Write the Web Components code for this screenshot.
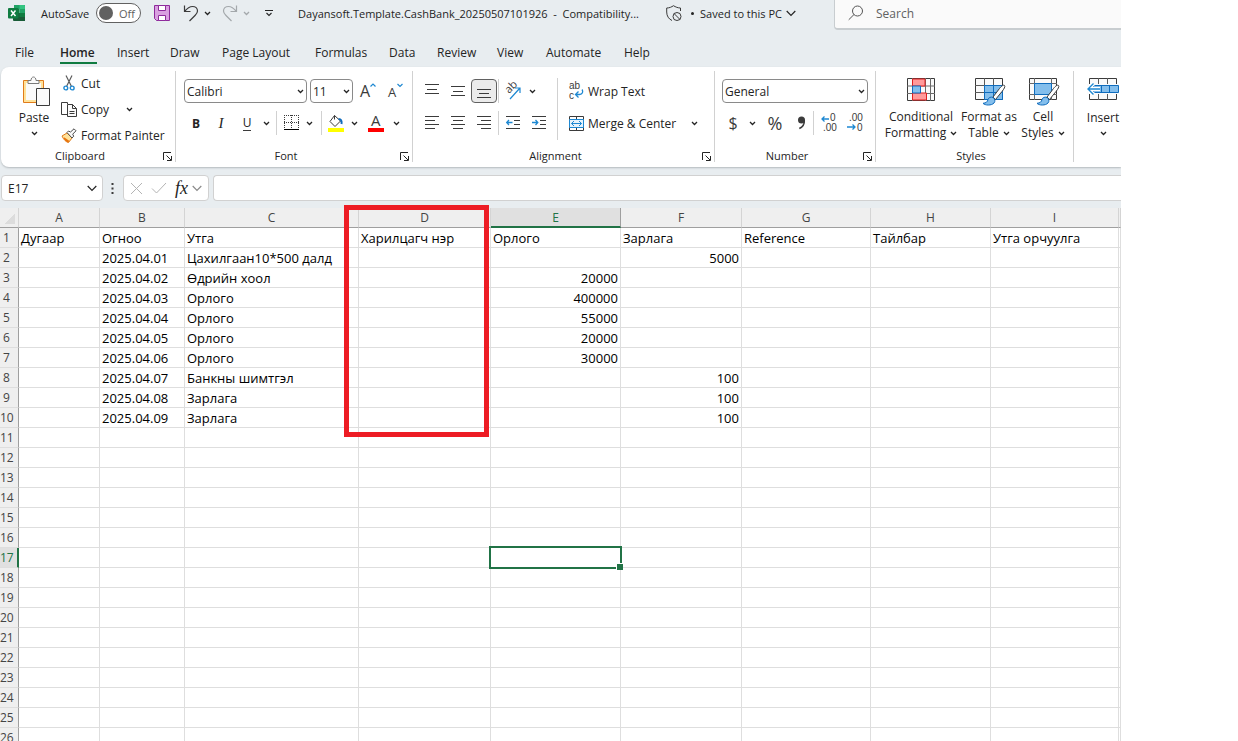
<!DOCTYPE html>
<html lang="en">
<head>
<meta charset="utf-8">
<title>Dayansoft.Template.CashBank_20250507101926 - Excel</title>
<style>
html, body { margin: 0; height: 100%; overflow: hidden; background: #fff; }
body { font-family: "Open Sans", "Noto Sans", sans-serif; font-size: 12px; color: #242424; }
</style>
</head>
<body>
<xl-app></xl-app>
<script>
const define = (name, css, html, ready) => {
  const tpl = document.createElement('template');
  tpl.innerHTML = `<style>*{box-sizing:border-box}${css}</style>${html}`;
  customElements.define(name, class extends HTMLElement {
    constructor() {
      super();
      this.attachShadow({ mode: 'open' }).append(tpl.content.cloneNode(true));
    }
    connectedCallback() { if (ready) ready.call(this, this.shadowRoot); }
  });
};

/* ---------- icons: [width, height, markup] ---------- */
const D = 'stroke="#3b3b3b" fill="none"';
const B = 'stroke="#1e88d2" fill="none"';
const brush = `<path d="M31.500 7.500c-1-1-3 .5-5 3l-6.500 8.500 2.500 2.500 6.500-8c2-2.500 3.500-5 2.500-6z" fill="#fff" stroke="#3b3b3b"/><path d="M20 19.500c-2-1-4.500 0-5 2-.5 2.500-2 3.500-5 3.800 2 2.200 8.500 2.500 11-.3 1.500-1.800 1-4-1-5.500z" fill="#83beec" stroke="#0f6cbd"/>`;
const lines = (w, ys, rows) => ys.map((y, i) => `<path d="M${rows[i][0]} ${y}.500H${rows[i][1]}" ${D}/>`).join('');
const SM = 'font-family="Liberation Sans" font-size="10" fill="#3b3b3b"';
const ICONS = {
  excel: [18, 18, `<path d="M6 1h11v4H6z" fill="#21a366"/><path d="M11.500 1H16a1 1 0 0 1 1 1v3h-5.500z" fill="#33c481"/><path d="M5 5h6.500v4H5z" fill="#107c41"/><path d="M11.500 5H17v4h-5.500z" fill="#21a366"/><path d="M5 9h12v8H6a1 1 0 0 1-1-1z" fill="#185c37"/><path d="M11.500 9H17v4h-5.500z" fill="#107c41"/><rect y="4" width="10.500" height="10.500" rx="1" fill="#107c41"/><path d="M3 6.500l4.500 5.500M7.500 6.500L3 12" stroke="#fff" stroke-width="1.500"/>`],
  save: [16, 16, `<path d="M.5.500h15v15h-13l-2-2z" fill="#d9a0e0" stroke="#8e2a9c"/><path d="M4.500.500h7v5h-7zM4.500 10.500h7v5h-7z" fill="#fff" stroke="#8e2a9c"/>`],
  undo: [16, 17, `<path d="M1.500.500v6h6M1.500 6.500C4 3.500 6.500 1.500 9.500 1.500c3 0 5 2 5 4.500 0 2-1 3-2.500 4.500L6.500 16" ${D} stroke-width="1.200"/>`],
  redo: [16, 17, `<path d="M14.500.500v6h-6M14.500 6.500C12 3.500 9.500 1.500 6.500 1.500c-3 0-5 2-5 4.500 0 2 1 3 2.500 4.500L9.500 16" stroke="#a3a8ab" fill="none" stroke-width="1.200"/>`],
  chev: [7, 5, `<path d="M1 1l2.500 2.500L6 1" stroke="currentColor" stroke-width="1.300" fill="none"/>`],
  bigchev: [10, 7, `<path d="M.7 1L5 5.300 9.300 1" stroke="currentColor" stroke-width="1.200" fill="none"/>`],
  custom: [8, 7, `<path d="M0 .500h8M1.500 3L4 5.500 6.500 3" stroke="#242424" fill="none" stroke-width="1.100"/>`],
  shield: [16, 17, `<path d="M14.500 6V3C12 3 9.500 2 7.500.700 5.500 2 3.500 3 .700 3v4c0 4 2 7 5.300 8.500" ${D}/><circle cx="11" cy="11.500" r="4" ${D}/><path d="M8.200 8.700l5.600 5.600" ${D}/>`],
  search: [16, 16, `<circle cx="9.500" cy="6" r="5" stroke="#555" fill="none"/><path d="M6 9.500L.700 14.800" stroke="#555"/>`],
  paste: [28, 31, `<path d="M1.500 4.500h20v22h-20z" fill="#ffe29a" stroke="#e07b1a"/><path d="M4 7h15v17H4z" fill="#fafafa"/><path d="M6 7.500V4.500h3c0-2 1-3.500 2.500-3.500S14 2.500 14 4.500h3v3z" fill="#fafafa" stroke="#7a7a7a"/><path d="M14.500 12.500h13v17h-13z" fill="#fafafa" stroke="#3b3b3b"/>`],
  cut: [12, 16, `<path d="M3 .500l5.500 11M9 .500L3.500 11.500" stroke="#5c5c5c" fill="none" stroke-width="1.200"/><circle cx="2.800" cy="13" r="1.900" ${B} stroke-width="1.400"/><circle cx="9.200" cy="13" r="1.900" ${B} stroke-width="1.400"/>`],
  copy: [16, 17, `<path d="M6 13.500H.500V1.500h6V3" ${D}/><path d="M6.500 3.500h5l4 4v8h-9z" fill="#fafafa" stroke="#3b3b3b"/><path d="M11.500 3.500v4h4M8.500 10.500h5M8.500 12.500h5" ${D}/>`],
  painter: [16, 15, `<path d="M1 8l5-3 5 5-3.500 4.500C5 14 2.500 11.500 1 8z" fill="#ffe29a" stroke="#e07b1a"/><path d="M3.500 9.500l5 3.500-1.500 1.500C5 13.500 3.500 12 2.500 10z" fill="#e8730c"/><path d="M6 4.500l1.500-1.500 2 1 3.500-3.200 2 2-3.300 3.400 1 2L11 10z" fill="#fafafa" stroke="#4a4a4a"/>`],
  launch: [9, 9, `<path d="M.500 8V.500H8M3.500 3.500l4.500 4.500M8.500 4v4.500H4" stroke="#242424" fill="none"/>`],
  growA: [16, 18, `<text x="0" y="15" font-size="16" fill="#3b3b3b">A</text><path d="M10.500 4.500L13 2l2.500 2.500" ${B} stroke-width="1.200"/>`],
  shrinkA: [16, 18, `<text x="1" y="15" font-size="13" fill="#3b3b3b">A</text><path d="M10.500 2l2.500 2.500L15.500 2" ${B} stroke-width="1.200"/>`],
  borders: [15, 16, `<path d="M0 .500h15M0 7.500h15M.500 0v14M7.500 0v14M14.500 0v14" stroke="#3b3b3b" stroke-dasharray="1 1"/><path d="M0 14.500h15" stroke="#000"/>`],
  fill: [16, 17, `<path d="M6.500 0.500l6 5.500-5.500 5.500L2 6.500zM6.500.500v4" fill="#fff" stroke="#3b3b3b"/><path d="M10.500 4c2.500 0 3.500 1.500 3 5" stroke="#0f6cbd" stroke-width="2" fill="none"/><path d="M0 13h16v4H0z" fill="#ff0"/>`],
  fontcolor: [16, 17, `<text x="3" y="11" font-size="15" fill="#3b3b3b">A</text><path d="M0 13h16v4H0z" fill="#f00"/>`],
  top: [14, 14, lines(14, [0, 5, 9], [[0, 14], [2, 12], [0, 14]])],
  middle: [14, 14, lines(14, [2, 7, 11], [[0, 14], [2, 12], [0, 14]])],
  bottom: [14, 14, lines(14, [5, 9, 13], [[0, 14], [2, 12], [0, 14]])],
  left: [14, 14, lines(14, [0, 4, 8, 12], [[0, 14], [0, 10], [0, 14], [0, 10]])],
  center: [14, 14, lines(14, [0, 4, 8, 12], [[0, 14], [2, 12], [0, 14], [2, 12]])],
  right: [14, 14, lines(14, [0, 4, 8, 12], [[0, 14], [4, 14], [0, 14], [4, 14]])],
  orient: [18, 17, `<text x="0" y="0" font-size="11" fill="#3b3b3b" transform="translate(5 11) rotate(-45)">ab</text><path d="M6 16L15.500 5.500M11 5h5v5" ${B} stroke-width="1.200"/>`],
  outdent: [14, 14, `<path d="M0 .500h14M8 4.500h6M8 8.500h6M0 12.500h14" ${D}/><path d="M6.500 6.500H.800M3 4L.700 6.500 3 9" ${B} stroke-width="1.300"/>`],
  indent: [14, 14, `<path d="M0 .500h14M8 4.500h6M8 8.500h6M0 12.500h14" ${D}/><path d="M0 6.500h5.500M3.500 4l2.300 2.500L3.500 9" ${B} stroke-width="1.300"/>`],
  wrap: [15, 18, `<text x="0" y="7" ${SM}>ab</text><text x="0" y="17" ${SM}>c</text><path d="M13 7.500c1.500 2 .5 5-2.500 5H6.500M9.500 9.500l-3 3 3 3" ${B} stroke-width="1.300"/>`],
  merge: [15, 15, `<path d="M.500.500h14v14H.500zM7.500 0v4M7.500 11v4" ${D}/><path d="M.500 3.500h14v8H.500z" fill="#e6f3fc" stroke="#1e88d2"/><path d="M2.500 7.500h10M5 5L2.500 7.500 5 10M10 5l2.500 2.500L10 10" ${B}/>`],
  incdec: [16, 18, `<text x="9" y="7" ${SM}>0</text><text x="2" y="17" ${SM}>.00</text><path d="M8 5H1M3.500 2.500L1 5l2.500 2.500" ${B} stroke-width="1.300"/>`],
  decdec: [16, 18, `<text x="2" y="7" ${SM}>.00</text><text x="10" y="17" ${SM}>0</text><path d="M0 13h8M5.500 10.500L8 13l-2.500 2.500" ${B} stroke-width="1.300"/>`],
  cond: [28, 24, `<path d="M.500.500h27v22H.500z" fill="#fafafa" stroke="#3b3b3b"/><path d="M18.500 0v23M23.500 0v23M0 8h28M0 15.500h28M5.500 0v23" stroke="#6a6a6a" fill="none"/><path d="M5.500 1h12.500v7H5.500zM5.500 15h14v7h-14z" fill="#ff9a9a" stroke="#e02020"/><path d="M5.500 8h8v7h-8z" fill="#83beec" stroke="#0f6cbd"/>`],
  fmttable: [28, 24, `<path d="M.500.500h27v21H.500z" fill="#fafafa" stroke="#3b3b3b"/><path d="M9.500 0v22M18.500 0v22M0 7.500h28M0 14.500h28" stroke="#5a5a5a" fill="none"/><path d="M9.500 7.500h18v14h-18z" fill="#83beec"/><path d="M9.500 7.500h18v14h-18zM9 14.500h18M18.500 7.500v14" fill="none" stroke="#0f6cbd"/><g transform="translate(-2 0)">${brush}</g>`],
  cellstyle: [28, 24, `<path d="M.500.500h27v21H.500z" fill="#fafafa" stroke="#3b3b3b"/><path d="M5.500 0v22M22.500 0v22M0 5.500h28M0 16.500h28" stroke="#6a6a6a" fill="none"/><path d="M5.500 5.500h17v11h-17z" fill="#83beec" stroke="#0f6cbd"/><g transform="translate(-2 0)">${brush}</g>`],
  insert: [32, 24, `<path d="M2.500.500h27v21h-27z" fill="#fafafa" stroke="#3b3b3b"/><path d="M11.500 0v22M20.500 0v22" stroke="#5a5a5a"/><path d="M0 6h32v10H0z" fill="#fafafa"/><path d="M6.500 7.500h25v7h-25z" fill="#83beec" stroke="#0f6cbd"/><path d="M14.500 7.500v7M22.500 7.500v7" stroke="#0f6cbd"/><path d="M13 11H1M6.500 5.500L1 11l5.500 5.500" stroke="#fff" stroke-width="4" fill="none"/><path d="M13 11H1M6.500 5.500L1 11l5.500 5.500" ${B} stroke-width="1.400"/>`],
  cancel: [13, 13, `<path d="M1 1l11 11M12 1L1 12" stroke="#b4b4b4"/>`],
  accept: [16, 12, `<path d="M1 6.500l4.500 4.500L15 1" stroke="#b4b4b4" fill="none"/>`],
  dots: [3, 11, `<path d="M.500 0h2v2h-2zM.500 4.500h2v2h-2zM.500 9h2v2h-2z" fill="#3b3b3b"/>`],
  comma: [9, 14, `<circle cx="4.500" cy="4" r="3.500" fill="#3b3b3b"/><path d="M7.300 4c.300 4-1.600 7-5 8.500" stroke="#3b3b3b" stroke-width="1.500" fill="none"/>`],
};
customElements.define('xl-icon', class extends HTMLElement {
  constructor() { super(); this.attachShadow({ mode: 'open' }); }
  connectedCallback() {
    const [w, h, body] = ICONS[this.getAttribute('name')];
    this.shadowRoot.innerHTML = `<style>:host{display:block;flex:none;width:${w}px;height:${h}px}svg{display:block;overflow:visible}</style><svg width="${w}" height="${h}" viewBox="0 0 ${w} ${h}" aria-hidden="true">${body}</svg>`;
  }
});

const BTN = `button{font:inherit;color:inherit;background:none;border:0;padding:0;margin:0;display:flex;align-items:center;justify-content:center;flex:none}`;

/* ---------- title bar ---------- */
define('xl-titlebar', `
:host{display:flex;align-items:flex-start;height:39px}
${BTN}
.bar{display:flex;align-items:center;height:26px;padding-left:8px;width:834px;flex:none;font-size:11px;white-space:nowrap}
.auto{display:flex;align-items:center;margin-left:15px;gap:7px}
.track{position:relative;display:flex;align-items:center;width:45px;height:20px;border:1px solid #616161;border-radius:10px;background:#fff;color:#616161}
input[type=checkbox]{appearance:none;width:14px;height:14px;border-radius:50%;background:#616161;margin:0 6px 0 2px}
.off{color:#616161}
.save{margin-left:13px}.undo{margin-left:13px}.cv{width:16px;height:16px}.redo{margin-left:7px}.pale{color:#a3a8ab}.custom{margin-left:11px}
h1{font:inherit;margin:0 0 0 25px;width:368px;white-space:pre}
.saved{display:flex;align-items:center;gap:4px}
.dot{width:3px;height:3px;border-radius:50%;background:#242424;margin:0 6px 0 9px}
.search{flex:1;display:flex;align-items:center;height:30px;padding:0 0 2px 13px;gap:12px;background:#fafafa;border:solid #c8cdd0;border-width:0 0 2px 1px;border-radius:0 0 0 4px;min-width:0}
.search input{border:0;background:none;font:inherit;padding:0;flex:1;min-width:0;outline:0}
.search input::placeholder{color:#616161;opacity:1}
`, `
<div class="bar"><xl-icon name="excel"></xl-icon>
<label class="auto">AutoSave<span class="track"><input type="checkbox"><span class="off">Off</span></span></label>
<button class="save" aria-label="Save"><xl-icon name="save"></xl-icon></button>
<button class="undo" aria-label="Undo"><xl-icon name="undo"></xl-icon></button><button class="cv" aria-label="Undo list"><xl-icon name="chev"></xl-icon></button>
<button class="redo" aria-label="Redo"><xl-icon name="redo"></xl-icon></button><button class="cv pale" aria-label="Redo list"><xl-icon name="chev"></xl-icon></button>
<button class="custom" aria-label="Customize toolbar"><xl-icon name="custom"></xl-icon></button>
<h1>Dayansoft.Template.CashBank_20250507101926  -  Compatibility...</h1>
<xl-icon name="shield"></xl-icon><span class="dot"></span>
<button class="saved">Saved to this PC<xl-icon name="bigchev"></xl-icon></button></div>
<label class="search"><xl-icon name="search"></xl-icon><input type="search" placeholder="Search" aria-label="Search"></label>`);

/* ---------- tabs ---------- */
define('xl-tabs', `
:host{display:block;height:28px}
nav{display:flex;padding-left:15px;gap:20px}
a{color:inherit;text-decoration:none;line-height:20px;padding:4px 0 0;white-space:nowrap;flex:none;height:25px}
a.on{font-weight:600;border-bottom:2px solid #107c41}
.w1{width:25px}.w2{width:37px}.w3{width:33px}.w4{width:32px}.w5{width:73px}.w6{width:54px}.w7{width:28px}.w8{width:40px}.w9{width:29px}.w10{width:58px}
`, `<nav>${['File', 'Home', 'Insert', 'Draw', 'Page Layout', 'Formulas', 'Data', 'Review', 'View', 'Automate', 'Help']
  .map((t, i) => `<a href="#" class="w${i + 1}${t === 'Home' ? ' on' : ''}">${t}</a>`).join('')}</nav>`);

/* ---------- ribbon group: body slot and caption ---------- */
define('xl-group', `
:host{display:flex;flex-direction:column;flex:none;position:relative;height:100%;border-right:1px solid transparent;border-image:linear-gradient(transparent 5px,#d1d1d1 5px,#d1d1d1 94px,transparent 94px) 1}
.body{height:79px}
footer{display:flex;align-items:center;height:21px;padding:0 3px 0 0}
footer span{flex:1;text-align:center;font-size:11px;line-height:18px;padding:0 4px 1px 0}
${BTN}
`, `<div class="body"><slot></slot></div><footer><span></span><button aria-label="More options"><xl-icon name="launch"></xl-icon></button></footer>`,
function (root) {
  root.querySelector('footer span').textContent = this.getAttribute('label') || '';
  if (this.hasAttribute('plain')) root.querySelector('footer button').remove();
});

/* ---------- boxed drop-down ---------- */
define('xl-combo', `
:host{display:flex;align-items:center;position:relative;height:24px;border:1px solid #8a8a8a;border-radius:4px;background:#fff;flex:none}
select{appearance:none;border:0;background:none;font:inherit;font-size:12px;color:inherit;flex:1;min-width:0;padding:0 0 0 2px;height:20px;outline:0}
xl-icon{margin-right:2px}
`, `<select><option></option></select><xl-icon name="chev"></xl-icon>`,
function (root) {
  root.querySelector('option').textContent = this.getAttribute('value');
  root.querySelector('select').setAttribute('aria-label', this.getAttribute('label'));
});

/* ---------- ribbon ---------- */
const b = (icon, w, label, extra = '') => `<button class="w${w}" ${extra} aria-label="${label}"><xl-icon name="${icon}"></xl-icon></button>`;
define('xl-ribbon', `
:host{display:flex;height:100px;margin-left:1px;background:#fff;border-radius:8px 0 0 8px;box-shadow:0 1px 2px #b4babd;overflow:visible}
${BTN}
xl-group.clip{width:175px}xl-group.font{width:237px}xl-group.align{width:302px}xl-group.num{width:161px}xl-group.styles{width:198px}xl-group.cells{width:56px;border:0}
.w8{width:8px}.w12{width:12px}.w14{width:14px}.w16{width:16px}.w20{width:20px}.w24{width:24px}.w26{width:26px}.w28{width:28px}.w32{width:32px}
.split{display:flex}
.big{flex-direction:column;justify-content:flex-start;padding-top:9px;width:66px;line-height:16px}
.big xl-icon[name=chev]{margin-top:5px}
.big xl-icon[name=paste]{margin:0 0 3px 4px}
.list{display:grid;grid-template-rows:repeat(3,26px);padding-top:3px;margin-left:-6px}
.item{display:flex;align-items:center;gap:4px}
.item>button{gap:4px;white-space:nowrap}
.ic{display:flex;justify-content:center;width:16px;flex:none}
.rows{display:grid;grid-template-rows:24px 24px;gap:8px;padding:12px 0 0 8px}
.row{display:flex;align-items:center}
.row>button{height:24px}
.font .row:first-child{gap:3px}
i.sep{display:block;flex:none;width:1px;height:24px;background:#d1d1d1;margin:0 4px}
.name{width:123px}.size{width:43px}.fmt{width:146px}
.b{font-weight:700}.i{font-style:italic;font-family:"Liberation Serif",serif;font-size:15px}.u span{border-bottom:1px solid #3b3b3b;line-height:14px}
.on{background:#ebebeb;border:1px solid #616161;border-radius:4px}
.align .rows{padding-left:6px}.align i.sep{margin:0 1px}
.long{width:1px;height:62px;background:#d1d1d1;margin:11px 0 0 5px;flex:none}
.align .wide{padding-left:10px}
.wide button{gap:4px;white-space:nowrap}
.wide .arrow{margin-left:10px}
.num i.sep{margin:0 2px}.num .rows{padding-left:6px}
.num .fmt{margin-left:1px}
.sym{font-size:16px;color:#3b3b3b}
.pct{font-size:18px}
.tiles{display:flex;padding-left:10px}
.tiles button{flex-direction:column;justify-content:flex-start;padding-top:11px;line-height:16px;white-space:nowrap}
.tiles button>xl-icon{margin-bottom:7px}
.tiles .l2{display:flex;align-items:center;gap:4px}
.tile1{width:70px}.tile2{width:66px}.tile3{width:42px}
.cells .big{width:58px;padding-top:11px}.cells .big xl-icon:first-child{margin-bottom:8px}
`, `
<xl-group class="clip" label="Clipboard"><div class="split">
 <button class="big"><xl-icon name="paste"></xl-icon>Paste<xl-icon name="chev"></xl-icon></button>
 <div class="list">
  <div class="item"><button><span class="ic"><xl-icon name="cut"></xl-icon></span>Cut</button></div>
  <div class="item"><button><span class="ic"><xl-icon name="copy"></xl-icon></span>Copy</button>${b('chev', 32, 'Copy options')}</div>
  <div class="item"><button><span class="ic"><xl-icon name="painter"></xl-icon></span>Format Painter</button></div>
 </div></div></xl-group>
<xl-group class="font" label="Font"><div class="rows">
 <div class="row"><xl-combo class="name" value="Calibri" label="Font"></xl-combo><xl-combo class="size" value="11" label="Font size"></xl-combo>${b('growA', 24, 'Increase font size')}${b('shrinkA', 24, 'Decrease font size')}</div>
 <div class="row"><button class="w24 b">B</button><button class="w26 i">I</button><button class="w26 u"><span>U</span></button>${b('chev', 12, 'Underline options')}<i class="sep"></i>${b('borders', 20, 'Borders')}${b('chev', 16, 'Border options')}<i class="sep"></i>${b('fill', 20, 'Fill colour')}${b('chev', 16, 'Fill options')}${b('fontcolor', 28, 'Font colour')}${b('chev', 12, 'Font colour options')}</div>
</div></xl-group>
<xl-group class="align" label="Alignment"><div class="split"><div class="rows">
 <div class="row">${b('top', 26, 'Top align')}${b('middle', 26, 'Middle align')}<button class="w26 on" aria-label="Bottom align" aria-pressed="true"><xl-icon name="bottom"></xl-icon></button><i class="sep"></i>${b('orient', 26, 'Orientation')}${b('chev', 12, 'Orientation options')}</div>
 <div class="row">${b('left', 26, 'Align left')}${b('center', 26, 'Center')}${b('right', 26, 'Align right')}<i class="sep"></i>${b('outdent', 26, 'Decrease indent')}${b('indent', 26, 'Increase indent')}</div>
</div><div class="long"></div><div class="rows wide">
 <div class="row"><button><span class="ic"><xl-icon name="wrap"></xl-icon></span>Wrap Text</button></div>
 <div class="row"><button><span class="ic"><xl-icon name="merge"></xl-icon></span>Merge &amp; Center</button><button class="arrow w16" aria-label="Merge options"><xl-icon name="chev"></xl-icon></button></div>
</div></div></xl-group>
<xl-group class="num" label="Number"><div class="rows">
 <div class="row"><xl-combo class="fmt" value="General" label="Number format"></xl-combo></div>
 <div class="row"><button class="w24 sym">$</button>${b('chev', 14, 'Currency options')}<button class="w32 sym pct">%</button>${b('comma', 20, 'Comma style')}<i class="sep"></i>${b('incdec', 26, 'Increase decimal')}${b('decdec', 26, 'Decrease decimal')}</div>
</div></xl-group>
<xl-group class="styles" label="Styles" plain><div class="tiles">
 <button class="tile1"><xl-icon name="cond"></xl-icon>Conditional<span class="l2">Formatting<xl-icon name="chev"></xl-icon></span></button>
 <button class="tile2"><xl-icon name="fmttable"></xl-icon>Format as<span class="l2">Table<xl-icon name="chev"></xl-icon></span></button>
 <button class="tile3"><xl-icon name="cellstyle"></xl-icon>Cell<span class="l2">Styles<xl-icon name="chev"></xl-icon></span></button>
</div></xl-group>
<xl-group class="cells" plain><button class="big"><xl-icon name="insert"></xl-icon>Insert<xl-icon name="chev"></xl-icon></button></xl-group>`);

/* ---------- formula bar ---------- */
define('xl-formulabar', `
:host{display:flex;align-items:center;height:41px;padding:1px 0 0 1px}
${BTN}
.box{display:flex;align-items:center;height:26px;background:#fff;border:1px solid #d1d1d1;border-radius:4px;flex:none}
input{border:0;background:none;font:inherit;color:inherit;padding:0 0 0 6px;flex:1;min-width:0;outline:0}
.name{width:102px;padding-right:5px}
xl-icon[name=dots]{margin:0 9px 0 8px}
.tools{width:86px;padding-left:6px;gap:8px;margin-right:4px}
.fx{font-family:"Liberation Serif",serif;font-style:italic;font-size:18px;color:#242424}
.fxs{color:#8a8a8a;margin-left:-4px}
.formula{flex:1;border-right:0;border-radius:4px 0 0 4px}
`, `
<div class="box name"><input value="E17" aria-label="Name box"><button aria-label="Names"><xl-icon name="bigchev"></xl-icon></button></div>
<xl-icon name="dots"></xl-icon>
<div class="box tools"><button aria-label="Cancel"><xl-icon name="cancel"></xl-icon></button><button aria-label="Enter"><xl-icon name="accept"></xl-icon></button><button class="fx">fx</button><button class="fxs" aria-label="Functions"><xl-icon name="bigchev"></xl-icon></button></div>
<div class="box formula"><input aria-label="Formula"></div>`);

/* ---------- worksheet ---------- */
const COLS = ['A', 'B', 'C', 'D', 'E', 'F', 'G', 'H', 'I'];
const WIDTHS = [81, 85, 174, 132, 130, 121, 129, 120, 128];
const DATA = [
  ['Дугаар', 'Огноо', 'Утга', 'Харилцагч нэр', 'Орлого', 'Зарлага', 'Reference', 'Тайлбар', 'Утга орчуулга'],
  ['', '2025.04.01', 'Цахилгаан10*500 далд', '', '', '5000'],
  ['', '2025.04.02', 'Өдрийн хоол', '', '20000'],
  ['', '2025.04.03', 'Орлого', '', '400000'],
  ['', '2025.04.04', 'Орлого', '', '55000'],
  ['', '2025.04.05', 'Орлого', '', '20000'],
  ['', '2025.04.06', 'Орлого', '', '30000'],
  ['', '2025.04.07', 'Банкны шимтгэл', '', '', '100'],
  ['', '2025.04.08', 'Зарлага', '', '', '100'],
  ['', '2025.04.09', 'Зарлага', '', '', '100'],
];
const body = Array.from({ length: 26 }, (_, r) => `<tr><th scope="row"${r === 16 ? ' class="cur"' : ''}>${r + 1}</th>` +
  COLS.map((_, c) => {
    const v = (DATA[r] || [])[c] || '';
    const cls = [/^\d+$/.test(v) ? 'n' : '', r === 16 && c === 4 ? 'sel' : ''].join(' ').trim();
    return `<td${cls ? ` class="${cls}"` : ''}>${v}</td>`;
  }).join('') + '<td></td></tr>').join('');
define('xl-sheet', `
:host{display:block;flex:1;min-height:0;overflow:hidden;background:#fff}
table{table-layout:fixed;width:100%;border-collapse:separate;border-spacing:0;color:#000;font-size:13px;line-height:18px}
th,td{height:20px;padding:1px 2px 0;white-space:nowrap;overflow:hidden;border:solid #dedede;border-width:0 1px 1px 0}
td{text-align:left}td.n{text-align:right}
th{font-weight:400;font-size:12px;color:#444;background:#efefef}
thead th{border-bottom-color:#9f9f9f;border-right-color:#d4d4d4;text-align:center}
thead th.cur{background:#e0e0e0;color:#217346;border-bottom:2px solid #217346;border-right-color:#9f9f9f;line-height:17px}
tbody th{padding:1px 5px 0 0;text-align:center;border-right-color:#9f9f9f}
tbody th.cur{color:#217346;background:#e0e0e0;border-right:2px solid #217346;padding-right:4px}
thead .corner{padding:0}
.corner i{display:block;width:11px;height:11px;margin:1px 0 0 4px;background:linear-gradient(135deg,transparent 50%,#dcdcdc 50%)}
td.sel{position:relative;overflow:visible}
td.sel::before{content:"";position:absolute;inset:-2px;border:2px solid #217346}
td.sel::after{content:"";position:absolute;right:-3px;bottom:-3px;width:6px;height:6px;background:#217346;border:solid #fff;border-width:1px 0 0 1px}
`, `<table><colgroup><col style="width:19px">${WIDTHS.map(w => `<col style="width:${w}px">`).join('')}<col></colgroup>
<thead><tr><th class="corner"><i></i></th>${COLS.map(c => `<th scope="col"${c === 'E' ? ' class="cur"' : ''}>${c}</th>`).join('')}<th></th></tr></thead><tbody>${body}</tbody></table>`);

/* ---------- window ---------- */
define('xl-app', `
:host{display:flex;flex-direction:column;height:100vh;margin-right:117px;background:#e8edf0;overflow:hidden}
main{position:relative;flex:1;min-height:0;display:flex;flex-direction:column}
.mark{position:absolute;left:344px;top:-3px;width:145px;height:232px;border:5px solid #ed1c24;pointer-events:none}
`, `<xl-titlebar></xl-titlebar><xl-tabs></xl-tabs><xl-ribbon></xl-ribbon><xl-formulabar></xl-formulabar><main><xl-sheet></xl-sheet><div class="mark"></div></main>`);
</script>
</body>
</html>
